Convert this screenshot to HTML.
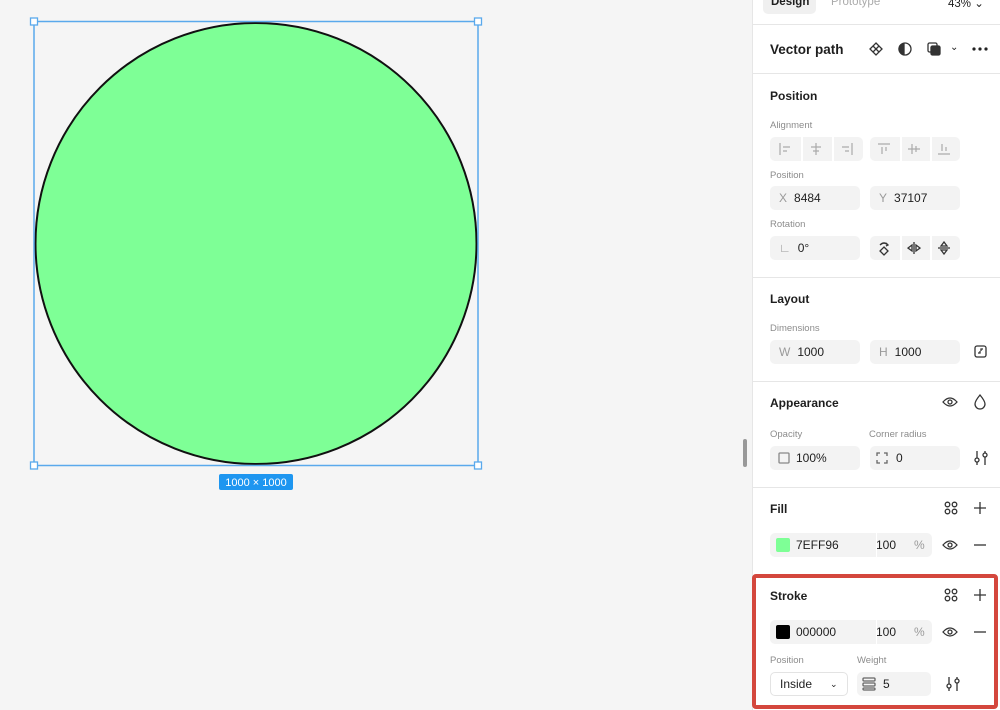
<!DOCTYPE html>
<html><head><meta charset="utf-8"><style>
*{box-sizing:border-box;margin:0;padding:0}
body{width:1000px;height:710px;overflow:hidden;background:#f5f5f5;font-family:"Liberation Sans",sans-serif;position:relative;color:#1e1e1e}
.a{position:absolute}
#panel{position:absolute;left:752px;top:0;width:248px;height:710px;background:#fff;border-left:1px solid #e6e6e6}
.hr{position:absolute;left:0;width:248px;height:1px;background:#e6e6e6}
.t{position:absolute;font-size:12px;font-weight:bold;color:#1e1e1e}
.l{position:absolute;font-size:9.5px;color:#8c8c8c}
.f{position:absolute;background:#f3f3f3;border-radius:5px;height:24px;font-size:12px;line-height:24px;color:#1e1e1e}
.f span.g{color:#9a9a9a;margin-right:7px}
svg.i{position:absolute;fill:none;stroke:#333;stroke-width:1.3}
svg.q{position:absolute;fill:none;stroke:#aaa;stroke-width:1.2}
.sep{position:absolute;width:2px;height:24px;background:#fff}
</style></head><body>
<svg class="a" style="left:0;top:0" width="752" height="710">
<circle cx="256" cy="243.5" r="220.5" fill="#7eff96" stroke="#111" stroke-width="2"/>
<rect x="34" y="21.5" width="444" height="444" fill="none" stroke="#5aa9ec" stroke-width="1.5"/>
<g fill="#fff" stroke="#5aa9ec" stroke-width="1.3">
<rect x="30.5" y="18" width="7" height="7"/><rect x="474.5" y="18" width="7" height="7"/>
<rect x="30.5" y="462" width="7" height="7"/><rect x="474.5" y="462" width="7" height="7"/></g>
<rect x="219" y="474" width="74" height="16" rx="2" fill="#1e96f0"/>
<text x="256" y="486" text-anchor="middle" font-size="11" fill="#fff" font-family="Liberation Sans">1000 × 1000</text>
<rect x="743" y="439" width="4" height="28" rx="2" fill="#999"/>
</svg>
<div id="panel">
<div class="a" style="left:10px;top:-6px;width:53px;height:20px;background:#f0f0f0;border-radius:5px"></div>
<div class="a" style="left:18px;top:-4px;font-size:11.5px;font-weight:bold">Design</div>
<div class="a" style="left:78px;top:-4px;font-size:11.5px;color:#aaa">Prototype</div>
<div class="a" style="left:195px;top:-4px;font-size:11.5px">43% ⌄</div>
<div class="hr" style="top:24px"></div>
<div class="t" style="left:17px;top:42px;font-size:13.5px">Vector path</div>
<svg class="i" style="left:115px;top:41px" width="16" height="16"><path d="M8 2l3 3-3 3-3-3zM8 8l3 3-3 3-3-3zM2 8l3-3 3 3-3 3zM14 8l-3-3-3 3 3 3z"/></svg>
<svg class="i" style="left:144px;top:41px" width="16" height="16"><circle cx="8" cy="8" r="6"/><path d="M7 3a5 5 0 0 0 0 10z" fill="#333"/></svg>
<svg class="i" style="left:173px;top:41px" width="16" height="16"><rect x="2" y="2" width="9" height="9" rx="1.5"/><rect x="5" y="5" width="9" height="9" rx="1.5" fill="#333"/></svg>
<div class="a" style="left:197px;top:42px;font-size:10px">⌄</div>
<svg class="a" style="left:218px;top:46px" width="18" height="6"><circle cx="3" cy="3" r="1.6" fill="#222"/><circle cx="9" cy="3" r="1.6" fill="#222"/><circle cx="15" cy="3" r="1.6" fill="#222"/></svg>
<div class="hr" style="top:73px"></div>
<div class="t" style="left:17px;top:89px">Position</div>
<div class="l" style="left:17px;top:120px">Alignment</div>
<div class="f" style="left:17px;top:137px;width:93px"></div>
<div class="sep" style="left:48px;top:137px"></div><div class="sep" style="left:79px;top:137px"></div>
<div class="f" style="left:117px;top:137px;width:90px"></div>
<div class="sep" style="left:147px;top:137px"></div><div class="sep" style="left:177px;top:137px"></div>
<svg class="q" style="left:25px;top:142px" width="14" height="14"><path d="M2 1v12M5 5h7M5 9h4"/></svg>
<svg class="q" style="left:56px;top:142px" width="14" height="14"><path d="M7 1v12M2 5h10M4 9h6"/></svg>
<svg class="q" style="left:87px;top:142px" width="14" height="14"><path d="M12 1v12M2 5h7M5 9h4"/></svg>
<svg class="q" style="left:124px;top:142px" width="14" height="14"><path d="M1 2h12M5 5v7M9 5v4"/></svg>
<svg class="q" style="left:154px;top:142px" width="14" height="14"><path d="M1 7h12M5 2v10M9 4v6"/></svg>
<svg class="q" style="left:184px;top:142px" width="14" height="14"><path d="M1 12h12M5 2v7M9 5v4"/></svg>
<div class="l" style="left:17px;top:170px">Position</div>
<div class="f" style="left:17px;top:186px;width:90px;padding-left:9px"><span class="g">X</span>8484</div>
<div class="f" style="left:117px;top:186px;width:90px;padding-left:9px"><span class="g">Y</span>37107</div>
<div class="l" style="left:17px;top:219px">Rotation</div>
<div class="f" style="left:17px;top:236px;width:90px;padding-left:9px"><span class="g">∟</span>0°</div>
<div class="f" style="left:117px;top:236px;width:90px"></div>
<div class="sep" style="left:147px;top:236px"></div><div class="sep" style="left:177px;top:236px"></div>
<svg class="i" style="left:124px;top:240px" width="14" height="16"><path d="M3 5q4-4 8 0M9 3l2 2-2 1M7 7l4 4-4 4-4-4z"/></svg>
<svg class="i" style="left:154px;top:241px" width="14" height="14"><path d="M7 1v12M5 4l-4 3 4 3zM9 4l4 3-4 3z"/></svg>
<svg class="i" style="left:184px;top:241px" width="14" height="14"><path d="M1 7h12M4 5l3-4 3 4zM4 9l3 4 3-4z"/></svg>
<div class="hr" style="top:277px"></div>
<div class="t" style="left:17px;top:292px">Layout</div>
<div class="l" style="left:17px;top:323px">Dimensions</div>
<div class="f" style="left:17px;top:340px;width:90px;padding-left:9px"><span class="g">W</span>1000</div>
<div class="f" style="left:117px;top:340px;width:90px;padding-left:9px"><span class="g">H</span>1000</div>
<svg class="i" style="left:221px;top:345px" width="14" height="14"><rect x="1" y="1" width="11" height="11" rx="2"/><path d="M4 8h2v-2M9 4h-2v2"/></svg>
<div class="hr" style="top:381px"></div>
<div class="t" style="left:17px;top:396px">Appearance</div>
<svg class="i" style="left:189px;top:395px" width="16" height="14"><path d="M1 7q7-8 14 0q-7 8-14 0z"/><circle cx="8" cy="7" r="2"/></svg>
<svg class="i" style="left:221px;top:394px" width="12" height="16"><path d="M6 1q5 6 5 9a5 5 0 0 1-10 0q0-3 5-9z"/></svg>
<div class="l" style="left:17px;top:429px">Opacity</div>
<div class="l" style="left:116px;top:429px">Corner radius</div>
<div class="f" style="left:17px;top:446px;width:90px;padding-left:26px">100%</div>
<svg class="i" style="left:25px;top:452px;stroke:#888" width="12" height="12"><rect x="1" y="1" width="10" height="10" rx="1"/></svg>
<div class="f" style="left:117px;top:446px;width:90px;padding-left:26px">0</div>
<svg class="i" style="left:123px;top:452px;stroke:#666" width="12" height="12"><path d="M1 4V1h3M8 1h3v3M11 8v3H8M4 11H1V8"/></svg>
<svg class="i" style="left:220px;top:450px" width="16" height="16"><path d="M4 1v14M12 1v14"/><circle cx="4" cy="10" r="2" fill="#fff"/><circle cx="12" cy="5" r="2" fill="#fff"/></svg>
<div class="hr" style="top:487px"></div>
<div class="t" style="left:17px;top:502px">Fill</div>
<svg class="i" style="left:191px;top:501px" width="14" height="14"><circle cx="3.5" cy="3.5" r="2.3"/><circle cx="10.5" cy="3.5" r="2.3"/><circle cx="3.5" cy="10.5" r="2.3"/><circle cx="10.5" cy="10.5" r="2.3"/></svg>
<svg class="i" style="left:220px;top:501px" width="14" height="14"><path d="M7 1v12M1 7h12"/></svg>
<div class="f" style="left:17px;top:533px;width:162px;padding-left:26px">7EFF96<span style="position:absolute;left:106px">100</span><span class="g" style="position:absolute;left:144px">%</span></div>
<div class="a" style="left:123px;top:533px;width:1px;height:24px;background:#fff"></div>
<div class="a" style="left:23px;top:538px;width:14px;height:14px;background:#7eff96;border-radius:2px"></div>
<svg class="i" style="left:189px;top:538px" width="16" height="14"><path d="M1 7q7-8 14 0q-7 8-14 0z"/><circle cx="8" cy="7" r="2"/></svg>
<svg class="i" style="left:220px;top:538px" width="14" height="14"><path d="M1 7h12"/></svg>
<div class="t" style="left:17px;top:589px">Stroke</div>
<svg class="i" style="left:191px;top:588px" width="14" height="14"><circle cx="3.5" cy="3.5" r="2.3"/><circle cx="10.5" cy="3.5" r="2.3"/><circle cx="3.5" cy="10.5" r="2.3"/><circle cx="10.5" cy="10.5" r="2.3"/></svg>
<svg class="i" style="left:220px;top:588px" width="14" height="14"><path d="M7 1v12M1 7h12"/></svg>
<div class="f" style="left:17px;top:620px;width:162px;padding-left:26px">000000<span style="position:absolute;left:106px">100</span><span class="g" style="position:absolute;left:144px">%</span></div>
<div class="a" style="left:123px;top:620px;width:1px;height:24px;background:#fff"></div>
<div class="a" style="left:23px;top:625px;width:14px;height:14px;background:#000;border-radius:2px"></div>
<svg class="i" style="left:189px;top:625px" width="16" height="14"><path d="M1 7q7-8 14 0q-7 8-14 0z"/><circle cx="8" cy="7" r="2"/></svg>
<svg class="i" style="left:220px;top:625px" width="14" height="14"><path d="M1 7h12"/></svg>
<div class="l" style="left:17px;top:655px">Position</div>
<div class="l" style="left:104px;top:655px">Weight</div>
<div class="a" style="left:17px;top:672px;width:78px;height:24px;border:1px solid #e3e3e3;border-radius:5px;font-size:12px;line-height:22px;padding-left:9px">Inside<span style="position:absolute;left:59px;font-size:9px">⌄</span></div>
<div class="f" style="left:104px;top:672px;width:74px;padding-left:26px">5</div>
<svg class="i" style="left:109px;top:677px;stroke:#666" width="14" height="14"><rect x="1" y="1" width="12" height="3" rx="1"/><rect x="1" y="6" width="12" height="3" rx="1"/><rect x="1" y="11" width="12" height="2" rx="1"/></svg>
<svg class="i" style="left:192px;top:676px" width="16" height="16"><path d="M4 1v14M12 1v14"/><circle cx="4" cy="10" r="2" fill="#fff"/><circle cx="12" cy="5" r="2" fill="#fff"/></svg>
</div>
<div class="a" style="left:752px;top:574px;width:246px;height:135px;border:4px solid #d4473d;border-radius:4px"></div>
</body></html>
